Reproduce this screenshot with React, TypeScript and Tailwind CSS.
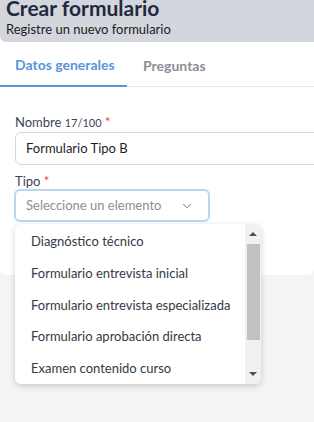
import { ChevronDown } from "lucide-react";

const opciones = [
  "Diagnóstico técnico",
  "Formulario entrevista inicial",
  "Formulario entrevista especializada",
  "Formulario aprobación directa",
  "Examen contenido curso",
];

export default function App() {
  return (
    <main className="relative min-h-screen overflow-hidden bg-[#f4f4f3] font-['Segoe_UI',Lato,sans-serif]">
      {/* Tarjeta principal */}
      <div className="bg-white rounded-b-md">
        <header className="h-[44px] bg-[#d3d6dc] rounded-bl-md px-[6px]">
          <h1 className="text-[21px] leading-[20px] font-bold text-[#1f2a3c] -mt-[2px]">Crear formulario</h1>
          <p className="text-[13px] leading-[16px] text-[#1b1b1b] mt-[3px]">Registre un nuevo formulario</p>
        </header>

        <nav className="flex h-[45px] border-b border-[#e5e7eb]">
          <button className="w-[127px] border-b-2 border-[#5b93d8] -mb-px pt-[2px] text-[14px] font-bold text-[#5b93d8] pl-[15px] text-left">
            Datos generales
          </button>
          <button className="pl-[16px] pt-[2px] text-[14px] font-bold text-[#8a8f98] text-left">Preguntas</button>
        </nav>

        <div className="pl-[15px] pt-[27px] pb-[53px]">
          <label className="block text-[13px] leading-[16px] text-[#3c4557]">
            Nombre <span className="text-[11px]">17/100</span> <span className="text-[#ef4444]">*</span>
          </label>
          <div className="mt-[1px] h-[33px] w-[320px] rounded-md border border-[#d4d7dc] flex items-center pl-[10px] text-[13px] text-[#1e1e1e]">
            Formulario Tipo B
          </div>

          <label className="block mt-[8px] text-[13px] leading-[16px] text-[#3c4557]">
            Tipo <span className="text-[#ef4444]">*</span>
          </label>
          <div className="-ml-px mt-[0px] h-[33px] w-[196px] rounded-md border-2 border-[#bcd6f2] flex items-center justify-between pl-[10px] pr-[14px] text-[13px] text-[#8a8f98]">
            <span>Seleccione un elemento</span>
            <ChevronDown size={14} strokeWidth={1.5} className="text-[#5a6270]" />
          </div>
        </div>
      </div>

      {/* Lista desplegable */}
      <div className="absolute left-[15px] top-[224px] w-[246px] h-[160px] bg-white rounded-md shadow-[0_2px_6px_rgba(0,0,0,0.18)] flex overflow-hidden">
        <ul className="flex-1 pt-[2px]">
          {opciones.map(o => (
            <li key={o} className="h-[31.75px] flex items-center pl-[16px] text-[13px] text-[#333a45]">{o}</li>
          ))}
        </ul>
        <div className="w-[16px] bg-[#f1f1f1] flex flex-col items-center">
          <div className="h-[20px] flex items-center justify-center">
            <div className="w-0 h-0 border-x-[4px] border-x-transparent border-b-[4px] border-b-[#505050]" />
          </div>
          <div className="w-[13px] h-[96px] bg-[#c1c1c1]" />
          <div className="flex-1" />
          <div className="h-[20px] flex items-center justify-center">
            <div className="w-0 h-0 border-x-[4px] border-x-transparent border-t-[4px] border-t-[#505050]" />
          </div>
        </div>
      </div>
    </main>
  );
}
